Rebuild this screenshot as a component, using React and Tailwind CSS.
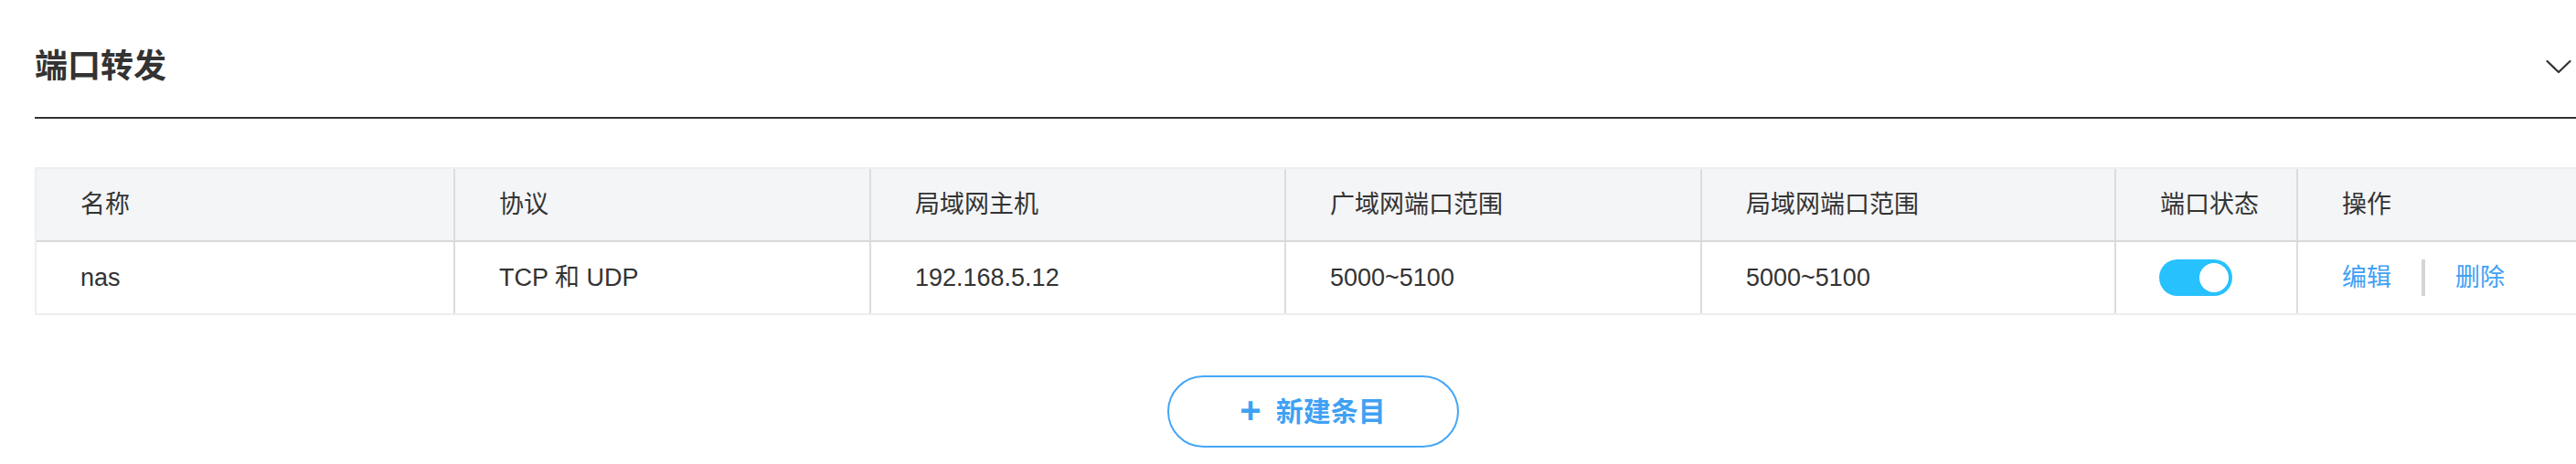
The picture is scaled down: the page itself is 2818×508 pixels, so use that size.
const font = { fontFamily: '"Liberation Sans", "Noto Sans CJK SC", sans-serif' }

const cols = "grid grid-cols-[456px_455px_454px_455px_453px_199px_1fr]"

const headers = ["名称", "协议", "局域网主机", "广域网端口范围", "局域网端口范围", "端口状态", "操作"]

const rows = [
  { name: "nas", proto: "TCP 和 UDP", host: "192.168.5.12", wan: "5000~5100", lan: "5000~5100", on: true },
]

function Toggle({ on }) {
  return (
    <div className={`w-[80px] h-[40px] rounded-full p-[4px] flex ${on ? "justify-end bg-[#27c1fe]" : "justify-start bg-[#d5d8dd]"}`}>
      <div className="w-[32px] h-[32px] rounded-full bg-white" />
    </div>
  )
}

export default function App() {
  return (
    <div className="w-[2818px] h-[508px] overflow-hidden bg-white text-[#333]" style={font}>
      <div className="ml-[38px] w-[2796px]">
        {/* Section header */}
        <div className="h-[130px] pt-[18px] pr-[21px] flex items-center justify-between border-b-2 border-[#333]">
          <h2 className="text-[36px] font-bold leading-none">端口转发</h2>
          <svg width="28" height="16" viewBox="0 0 28 16" fill="none" stroke="#333" strokeWidth="2.2" strokeLinecap="round" strokeLinejoin="round">
            <polyline points="1.5,2 14,14 26.5,2" />
          </svg>
        </div>

        {/* Table */}
        <div className="mt-[53px] border-2 border-[#eceef1] text-[27px]">
          <div className={`${cols} h-[80px] bg-[#f4f5f7] border-b-2 border-[#d9d9d9]`}>
            {headers.map((h, i) => (
              <div
                key={h}
                className={`flex items-center pl-[48px] ${i > 0 ? "border-l-2 border-[#dcdcdc]" : ""}`}
              >
                {h}
              </div>
            ))}
          </div>
          {rows.map((r) => (
            <div key={r.name} className={`${cols} h-[78px]`}>
              <div className="flex items-center pl-[48px]">{r.name}</div>
              <div className="flex items-center pl-[48px] border-l-2 border-[#dcdcdc]">{r.proto}</div>
              <div className="flex items-center pl-[48px] border-l-2 border-[#dcdcdc]">{r.host}</div>
              <div className="flex items-center pl-[48px] border-l-2 border-[#dcdcdc]">{r.wan}</div>
              <div className="flex items-center pl-[48px] border-l-2 border-[#dcdcdc]">{r.lan}</div>
              <div className="flex items-center pl-[47px] border-l-2 border-[#dcdcdc]">
                <Toggle on={r.on} />
              </div>
              <div className="flex items-center pl-[48px] border-l-2 border-[#dcdcdc] text-[#3fa1f4]">
                <a href="#">编辑</a>
                <span className="mx-[33px] w-[4px] h-[40px] bg-[#d5d5d5]" />
                <a href="#">删除</a>
              </div>
            </div>
          ))}
        </div>

        {/* Add button */}
        <div className="mt-[66px] flex justify-center">
          <button
            type="button"
            className="w-[319px] h-[79px] rounded-full border-2 border-[#45a6f5] flex items-center justify-center gap-[16px] text-[#3fa1f4] text-[30px] font-semibold"
          >
            <span className="text-[40px] font-bold leading-none -mt-[4px]">+</span>
            <span>新建条目</span>
          </button>
        </div>
      </div>
    </div>
  )
}
